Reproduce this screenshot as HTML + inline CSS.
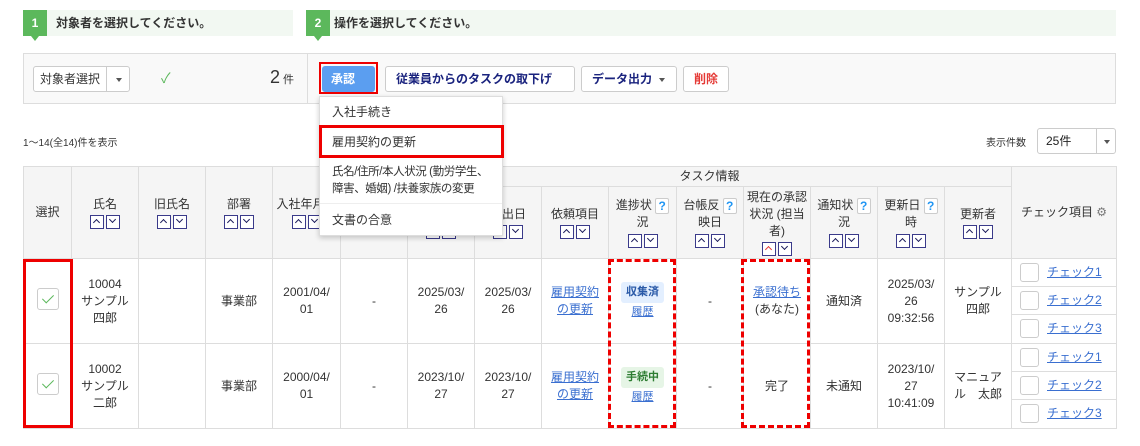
<!DOCTYPE html>
<html><head><meta charset="utf-8"><style>
*{box-sizing:border-box;margin:0;padding:0}
body{width:1140px;height:446px;background:#fff;font-family:"Liberation Sans","Noto Sans CJK JP",sans-serif;font-size:12px;color:#333;position:relative;overflow:hidden}
.abs{position:absolute}
.step{position:absolute;top:10px;height:26px;background:#f2f8f2;font-weight:bold;font-size:12px;line-height:26px}
.num{position:absolute;left:0;top:0;width:24px;height:26px;background:#5cb85c;color:#fff;text-align:center}
.num:after{content:"";position:absolute;left:8px;bottom:-5px;border-left:4px solid transparent;border-right:4px solid transparent;border-top:5px solid #5cb85c}
.btn{position:absolute;top:66px;height:26px;border:1px solid #ccc;border-radius:3px;background:#fff;font-weight:bold;color:#1a237e;line-height:24px;padding:0 10px;font-size:12px}
.car{display:inline-block;border-left:3px solid transparent;border-right:3px solid transparent;border-top:4px solid #555;vertical-align:middle;margin-left:7px}
table{position:absolute;left:23px;top:166px;border-collapse:collapse;table-layout:fixed}
td,th{border:1px solid #ddd;text-align:center;vertical-align:middle;font-weight:normal;font-size:12px;line-height:17px}
th{background:#f5f5f5}
.s{display:inline-block;width:14px;height:14px;border:1.5px solid #3a3a8a;margin:2px 1px 0;position:relative;vertical-align:middle;background:#fff}
.s.u:after,.s.d:after{content:"";position:absolute;left:3px;width:4px;height:4px;border-left:1.5px solid #1a1a5a;border-top:1.5px solid #1a1a5a}
.s.u:after{top:4px;transform:rotate(45deg)}
.s.d:after{top:1px;transform:rotate(225deg)}
.s.r:after{border-color:#e53935}
.q{display:inline-block;width:14px;height:16px;border:1px solid #ccc;border-radius:2px;color:#2196f3;font-size:12px;line-height:14px;vertical-align:middle;font-weight:bold;background:#fff}
a{color:#3a6fd0;text-decoration:underline}
.cb{display:inline-block;width:22px;height:22px;border:1px solid #ccc;border-radius:3px;position:relative;background:#fff}
.cb:after{content:"";position:absolute;left:7px;top:3px;width:5px;height:10px;border-right:1.5px solid #5cb85c;border-bottom:1.5px solid #5cb85c;transform:rotate(45deg)}
.ck{height:28px;border-bottom:1px solid #ddd;text-align:left;padding-left:8px;line-height:27px}
.ck:last-child{border-bottom:none}
.ck span{display:inline-block;width:19px;height:19px;border:1px solid #ccc;border-radius:3px;vertical-align:middle;margin-right:8px}
.tag{display:inline-block;padding:2px 5px;border-radius:3px;font-weight:bold;font-size:11px}
.menu div{white-space:nowrap}
</style></head><body>
<div class="step" style="left:23px;width:270px"><div class="num">1</div><span style="margin-left:33px">対象者を選択してください。</span></div>
<div class="step" style="left:306px;width:810px"><div class="num">2</div><span style="margin-left:28px">操作を選択してください。</span></div>

<div class="abs" style="left:23px;top:53px;width:1093px;height:51px;background:#f9f9f9;border:1px solid #ddd"></div>
<div class="abs" style="left:307px;top:53px;width:1px;height:51px;background:#ddd"></div>
<div class="abs" style="left:33px;top:66px;width:97px;height:26px;border:1px solid #ccc;border-radius:3px;background:#fff;line-height:24px;padding-left:6px;font-size:12px">対象者選択<span class="abs" style="left:72px;top:0;height:24px;border-left:1px solid #ccc;width:24px;text-align:center"><span class="car" style="margin:0"></span></span></div>
<div class="abs" style="left:161px;top:68px;color:#5cb85c;font-size:14px">✓</div>
<div class="abs" style="left:270px;top:67px;font-size:18px">2<span style="font-size:11px;margin-left:3px">件</span></div>
<div class="abs" style="left:319px;top:62px;width:59px;height:32px;border:2px solid #e00"></div>
<div class="btn" style="left:322px;width:53px;background:#5b9ef0;border-color:#5b9ef0;color:#fff;padding:0 8px">承認<span class="car" style="border-top-color:#fff"></span></div>
<div class="btn" style="left:385px;width:190px">従業員からのタスクの取下げ<span class="car"></span></div>
<div class="btn" style="left:581px;width:96px">データ出力<span class="car"></span></div>
<div class="btn" style="left:683px;width:46px;color:#e53935">削除</div>

<div class="abs" style="left:23px;top:134px;font-size:10px">1〜14(全14)件を表示</div>
<div class="abs" style="left:986px;top:134px;font-size:10px">表示件数</div>
<div class="abs" style="left:1037px;top:128px;width:79px;height:26px;border:1px solid #ccc;border-radius:3px;line-height:24px;padding-left:8px;font-size:12px;color:#222">25件<span class="abs" style="left:58px;top:0;height:24px;border-left:1px solid #ccc;width:20px;text-align:center"><span class="car" style="margin:0"></span></span></div>

<table>
<colgroup><col style="width:48px"><col style="width:67px"><col style="width:67px"><col style="width:67px"><col style="width:68px"><col style="width:67px"><col style="width:67px"><col style="width:67px"><col style="width:67px"><col style="width:68px"><col style="width:67px"><col style="width:67px"><col style="width:67px"><col style="width:67px"><col style="width:67px"><col style="width:105px"></colgroup>
<tr style="height:20px"><th rowspan="2">選択</th><th rowspan="2">氏名<br><i class="s u"></i><i class="s d"></i></th><th rowspan="2">旧氏名<br><i class="s u"></i><i class="s d"></i></th><th rowspan="2">部署<br><i class="s u"></i><i class="s d"></i></th><th rowspan="2">入社年月日<br><i class="s u"></i><i class="s d"></i></th><th rowspan="2">退職日<br><i class="s u"></i><i class="s d"></i></th><th colspan="9">タスク情報</th><th rowspan="2">チェック項目 <span style="color:#777">⚙</span></th></tr>
<tr style="height:72px"><th>提出日<br><i class="s u"></i><i class="s d"></i></th><th>提出日<br><i class="s u"></i><i class="s d"></i></th><th>依頼項目<br><i class="s u"></i><i class="s d"></i></th><th>進捗状 <span class="q">?</span><br>況<br><i class="s u"></i><i class="s d"></i></th><th>台帳反 <span class="q">?</span><br>映日<br><i class="s u"></i><i class="s d"></i></th><th>現在の承認<br>状況 (担当<br>者)<br><i class="s u r"></i><i class="s d"></i></th><th>通知状 <span class="q">?</span><br>況<br><i class="s u"></i><i class="s d"></i></th><th>更新日 <span class="q">?</span><br>時<br><i class="s u"></i><i class="s d"></i></th><th>更新者<br><i class="s u"></i><i class="s d"></i></th></tr>
<tr style="height:84px"><td><span class="cb"></span></td><td>10004<br>サンプル<br>四郎</td><td></td><td>事業部</td><td>2001/04/<br>01</td><td>-</td><td>2025/03/<br>26</td><td>2025/03/<br>26</td><td><a>雇用契約<br>の更新</a></td><td><span class="tag" style="background:#e3efff;color:#2a5aa8">収集済</span><br><a style="font-size:11px">履歴</a></td><td>-</td><td><a>承認待ち</a><br>(あなた)</td><td>通知済</td><td>2025/03/<br>26<br>09:32:56</td><td>サンプル<br>四郎</td><td style="padding:0"><div class="ck"><span></span><a>チェック1</a></div><div class="ck"><span></span><a>チェック2</a></div><div class="ck"><span></span><a>チェック3</a></div></td></tr>
<tr style="height:84px"><td><span class="cb"></span></td><td>10002<br>サンプル<br>二郎</td><td></td><td>事業部</td><td>2000/04/<br>01</td><td>-</td><td>2023/10/<br>27</td><td>2023/10/<br>27</td><td><a>雇用契約<br>の更新</a></td><td><span class="tag" style="background:#e6f5e6;color:#2e7d32">手続中</span><br><a style="font-size:11px">履歴</a></td><td>-</td><td>完了</td><td>未通知</td><td>2023/10/<br>27<br>10:41:09</td><td>マニュア<br>ル　太郎</td><td style="padding:0"><div class="ck"><span></span><a>チェック1</a></div><div class="ck"><span></span><a>チェック2</a></div><div class="ck"><span></span><a>チェック3</a></div></td></tr>
</table>

<div class="abs" style="left:23px;top:259px;width:50px;height:169px;border:3px solid #e00"></div>
<div class="abs" style="left:608px;top:259px;width:68px;height:169px;border:3px dashed #e00"></div>
<div class="abs" style="left:741px;top:259px;width:69px;height:169px;border:3px dashed #e00"></div>

<div class="abs menu" style="left:319px;top:96px;width:184px;height:140px;background:#fff;border:1px solid #ddd;box-shadow:0 2px 5px rgba(0,0,0,.2);font-size:12px">
<div style="padding:6px 12px;height:30px">入社手続き</div>
<div style="padding:6px 12px;height:31px">雇用契約の更新</div>
<div style="padding:6px 0 6px 12px;height:46px;line-height:17px;border-bottom:1px solid #eee;font-size:11.5px;letter-spacing:-0.4px">氏名/住所/本人状況 (勤労学生、<br>障害、婚姻) /扶養家族の変更</div>
<div style="padding:7px 12px">文書の合意</div>
</div>
<div class="abs" style="left:319px;top:125px;width:185px;height:33px;border:3px solid #e00"></div>
</body></html>
